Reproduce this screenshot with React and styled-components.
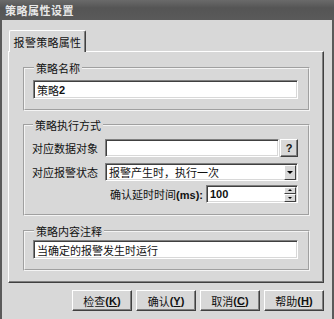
import styled, { createGlobalStyle } from 'styled-components';

const GlobalStyle = createGlobalStyle`
  html, body {
    margin: 0;
    padding: 0;
    background: #d8d8d8;
  }
  body {
    font-family: "Noto Sans CJK SC", "DejaVu Sans", sans-serif;
    font-size: 11px;
    color: #111;
  }
`;

const Window = styled.div`
  width: 334px;
  height: 319px;
  display: flex;
  flex-direction: column;
  background: #d8d8d8;
`;

const TitleBar = styled.div`
  height: 20px;
  flex: none;
  display: flex;
  align-items: center;
  padding-left: 5px;
  background: linear-gradient(#6a6a6a, #555 40%, #5a5a5a);
  color: #e8e8e8;
  font-weight: bold;
  font-size: 11px;
  letter-spacing: 0.5px;
`;

const Body = styled.div`
  flex: 1;
  display: flex;
  flex-direction: column;
  padding: 10px 8px 8px 6px;
  border: 2px solid #5a5a5a;
  border-top: none;
`;

const TabStrip = styled.div`
  display: flex;
  padding-left: 1px;
  height: 21px;
  position: relative;
  z-index: 1;
`;

const Tab = styled.div`
  width: 77px;
  height: 22px;
  box-sizing: border-box;
  display: flex;
  align-items: center;
  justify-content: center;
  background: #d8d8d8;
  border-top: 1px solid #fff;
  border-left: 1px solid #fff;
  border-right: 1px solid #404040;
  box-shadow: inset -1px 0 0 #808080;
  border-radius: 2px 2px 0 0;
  font-size: 11px;
  letter-spacing: 0.3px;
`;

const Panel = styled.div`
  height: 232px;
  box-sizing: border-box;
  border-top: 1px solid #fff;
  border-left: 1px solid #fff;
  border-right: 1px solid #404040;
  border-bottom: 1px solid #404040;
  box-shadow: inset -1px -1px 0 #808080;
  padding: 9px 13px 0 14px;
  display: flex;
  flex-direction: column;
`;

const Group = styled.fieldset`
  margin: 0 0 ${(p) => p.$gap}px;
  padding: ${(p) => p.$pad};
  border: 2px groove #f4f4f4;
  min-width: 0;
`;

const Legend = styled.legend`
  padding: 0 2px;
  margin-left: 1px;
  font-size: 11px;
  line-height: 14px;
`;

const Sunken = styled.div`
  box-sizing: border-box;
  height: ${(p) => p.$h || 19}px;
  background: #fff;
  border: 1px solid;
  border-color: #808080 #fff #fff #808080;
  box-shadow: inset 1px 1px 0 #404040, inset -1px -1px 0 #d8d8d8;
  display: flex;
  align-items: center;
  padding-left: 3px;
  font-size: 11px;
`;

const TextBox = styled(Sunken)`
  flex: 1;
`;

const Row = styled.div`
  display: flex;
  align-items: center;
  justify-content: ${(p) => (p.$end ? 'flex-end' : 'flex-start')};
  margin-top: ${(p) => p.$mt || 0}px;
`;

const Label = styled.span`
  width: ${(p) => (p.$w ? `${p.$w}px` : 'auto')};
  flex: none;
  font-size: 11px;
  white-space: nowrap;
`;

const Latin = styled.span`
  font-family: "Liberation Sans", Arial, sans-serif;
  font-weight: bold;
  font-size: 11px;
`;

const SmallButton = styled.div`
  width: 18px;
  height: 18px;
  box-sizing: border-box;
  flex: none;
  margin-left: 1px;
  display: flex;
  align-items: center;
  justify-content: center;
  background: #d8d8d8;
  border: 1px solid;
  border-color: #fff #404040 #404040 #fff;
  box-shadow: inset -1px -1px 0 #808080;
  font-family: "Liberation Sans", Arial, sans-serif;
  font-weight: bold;
  font-size: 11px;
`;

const Combo = styled(Sunken)`
  flex: 1;
  padding-right: 1px;
  justify-content: space-between;
`;

const NumberBox = styled(Sunken)`
  width: 92px;
  margin-left: 3px;
  justify-content: space-between;
`;

const DropBtn = styled.div`
  width: 12px;
  height: 15px;
  box-sizing: border-box;
  background: #d8d8d8;
  border: 1px solid;
  border-color: #fff #404040 #404040 #fff;
  display: flex;
  align-items: center;
  justify-content: center;
`;

const Spin = styled.div`
  width: 12px;
  height: 15px;
  display: flex;
  flex-direction: column;
  margin-right: 1px;
`;

const SpinHalf = styled.div`
  flex: 1;
  box-sizing: border-box;
  background: #d8d8d8;
  border: 1px solid;
  border-color: #fff #404040 #404040 #fff;
  display: flex;
  align-items: center;
  justify-content: center;
`;

const Arrow = styled.span`
  width: 0;
  height: 0;
  border-left: ${(p) => p.$s}px solid transparent;
  border-right: ${(p) => p.$s}px solid transparent;
  ${(p) => (p.$up ? 'border-bottom' : 'border-top')}: ${(p) => p.$s}px solid #000;
`;

const ButtonRow = styled.div`
  display: flex;
  justify-content: flex-end;
  gap: 4px;
  margin-top: 7px;
`;

const Button = styled.div`
  width: 60px;
  height: 21px;
  box-sizing: border-box;
  display: flex;
  align-items: center;
  justify-content: center;
  background: #d8d8d8;
  border: 1px solid;
  border-color: #fff #404040 #404040 #fff;
  box-shadow: inset -1px -1px 0 #808080;
  font-size: 11px;
`;

const Key = styled.u`
  text-underline-offset: 1px;
`;

const buttons = [
  { text: '检查', key: 'K' },
  { text: '确认', key: 'Y' },
  { text: '取消', key: 'C' },
  { text: '帮助', key: 'H' },
];

export default function App() {
  return (
    <>
      <GlobalStyle />
      <Window>
        <TitleBar>策略属性设置</TitleBar>
        <Body>
          <TabStrip>
            <Tab>报警策略属性</Tab>
          </TabStrip>
          <Panel>
            <Group $pad="5px 10px 10px 8px" $gap={7}>
              <Legend>策略名称</Legend>
              <Row>
                <TextBox>
                  策略<Latin>2</Latin>
                </TextBox>
              </Row>
            </Group>
            <Group $pad="7px 10px 11px 7px" $gap={8}>
              <Legend>策略执行方式</Legend>
              <Row>
                <Label $w={73}>对应数据对象</Label>
                <TextBox $h={18} />
                <SmallButton>?</SmallButton>
              </Row>
              <Row $mt={6}>
                <Label $w={73}>对应报警状态</Label>
                <Combo $h={18}>
                  报警产生时，执行一次
                  <DropBtn>
                    <Arrow $s={3} />
                  </DropBtn>
                </Combo>
              </Row>
              <Row $mt={4} $end>
                <Label>
                  确认延时时间<Latin>(ms):</Latin>
                </Label>
                <NumberBox $h={18}>
                  <Latin>100</Latin>
                  <Spin>
                    <SpinHalf>
                      <Arrow $s={2} $up />
                    </SpinHalf>
                    <SpinHalf>
                      <Arrow $s={2} />
                    </SpinHalf>
                  </Spin>
                </NumberBox>
              </Row>
            </Group>
            <Group $pad="2px 10px 10px 8px" $gap={0}>
              <Legend>策略内容注释</Legend>
              <Row>
                <TextBox>当确定的报警发生时运行</TextBox>
              </Row>
            </Group>
          </Panel>
          <ButtonRow>
            {buttons.map((b) => (
              <Button key={b.key}>
                {b.text}
                <Latin>
                  (<Key>{b.key}</Key>)
                </Latin>
              </Button>
            ))}
          </ButtonRow>
        </Body>
      </Window>
    </>
  );
}
